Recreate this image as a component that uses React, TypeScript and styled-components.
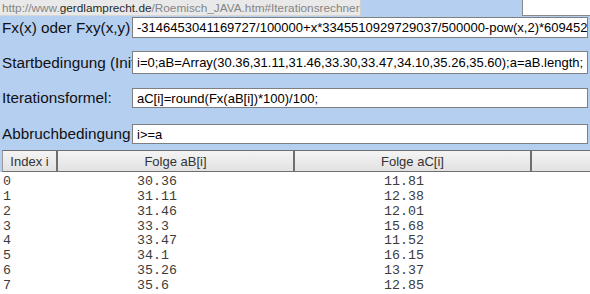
import React from "react";
import styled, { createGlobalStyle } from "styled-components";

const GlobalStyle = createGlobalStyle`
  html, body {
    margin: 0;
    padding: 0;
    background: #b5cff1;
    overflow: hidden;
  }
  body {
    font-family: "Liberation Sans", Arial, sans-serif;
  }
`;

const Page = styled.div`
  position: relative;
  width: 590px;
  height: 294px;
  overflow: hidden;
`;

// status bar link preview, lies over the page
const UrlTip = styled.div`
  position: absolute;
  left: 0;
  top: 0;
  width: 361px;
  height: 16px;
  box-sizing: border-box;
  padding: 0 0 0 2px;
  background: #e9e9e9;
  border-right: 1px solid #cfcfcf;
  border-bottom: 1px solid #d6d6d6;
  font-size: 11.8px;
  line-height: 16px;
  color: #858585;
  white-space: nowrap;
  overflow: hidden;
  z-index: 2;
`;

const Domain = styled.span`
  color: #2a2a2a;
`;

const TopStrip = styled.div`
  display: flex;
  justify-content: flex-end;
  height: 17px;
`;

const TopBox = styled.div`
  width: 67px;
  height: 15px;
  background: #fff;
  border-left: 1px solid #8a8a8a;
  border-bottom: 1px solid #8a8a8a;
`;

const Row = styled.div<{ $h: number; $mt: number }>`
  display: flex;
  align-items: center;
  height: ${(p) => p.$h}px;
  margin-top: ${(p) => p.$mt}px;
`;

const Label = styled.div`
  width: 130px;
  padding-left: 2px;
  flex: none;
  font-size: 15.3px;
  color: #111;
  white-space: nowrap;
  overflow: hidden;
`;

const Field = styled.div`
  flex: 1;
  height: 100%;
  margin-right: 2px;
  box-sizing: border-box;
  background: #fff;
  border: 1px solid #7f7f7f;
  padding: 0 0 0 4px;
  display: flex;
  align-items: center;
  font-size: 13px;
  color: #000;
  white-space: nowrap;
  overflow: hidden;
`;

const Header = styled.div`
  display: grid;
  grid-template-columns: 55px 237px 237px 1fr;
  margin: 6px 0 0 2px;
  height: 22px;
  box-sizing: border-box;
  border-top: 1px solid #6f6f6f;
  border-left: 1px solid #9a9a9a;
  border-bottom: 1px solid #6f6f6f;
  background: linear-gradient(#f4f4f4, #e2e2e2);
`;

const HeadCell = styled.div<{ $last?: boolean }>`
  display: flex;
  align-items: center;
  justify-content: center;
  font-size: 13px;
  color: #333;
  border-right: ${(p) => (p.$last ? "none" : "2px solid #6e6e6e")};
`;

const Body = styled.div`
  background: #fff;
  padding: 3px 0 0 3px;
  height: 130px;
  font-family: "Liberation Mono", "Courier New", monospace;
  font-size: 13.3px;
  line-height: 14.86px;
  color: #3c3c3c;
`;

const DataRow = styled.div`
  display: grid;
  grid-template-columns: 134px 247px 1fr;
  white-space: pre;
`;

const fields = [
  {
    label: "Fx(x) oder Fxy(x,y)",
    value:
      "-3146453041169727/100000+x*3345510929729037/500000-pow(x,2)*6094528",
    h: 21,
    mt: 0,
  },
  {
    label: "Startbedingung (Initialisierung)",
    value:
      "i=0;aB=Array(30.36,31.11,31.46,33.30,33.47,34.10,35.26,35.60);a=aB.length;",
    h: 23,
    mt: 13,
  },
  {
    label: "Iterationsformel:",
    value: "aC[i]=round(Fx(aB[i])*100)/100;",
    h: 20,
    mt: 14,
  },
  { label: "Abbruchbedingung", value: "i>=a", h: 20, mt: 16 },
];

const rows = [
  ["0", "30.36", "11.81"],
  ["1", "31.11", "12.38"],
  ["2", "31.46", "12.01"],
  ["3", "33.3", "15.68"],
  ["4", "33.47", "11.52"],
  ["5", "34.1", "16.15"],
  ["6", "35.26", "13.37"],
  ["7", "35.6", "12.85"],
];

export default function App() {
  return (
    <Page>
      <GlobalStyle />
      <UrlTip>
        http://www.<Domain>gerdlamprecht.de</Domain>/Roemisch_JAVA.htm#Iterationsrechner
      </UrlTip>
      <TopStrip>
        <TopBox />
      </TopStrip>
      {fields.map((f) => (
        <Row key={f.label} $h={f.h} $mt={f.mt}>
          <Label>{f.label}</Label>
          <Field>{f.value}</Field>
        </Row>
      ))}
      <Header>
        <HeadCell>Index i</HeadCell>
        <HeadCell>Folge aB[i]</HeadCell>
        <HeadCell>Folge aC[i]</HeadCell>
        <HeadCell $last />
      </Header>
      <Body>
        {rows.map((r) => (
          <DataRow key={r[0]}>
            <span>{r[0]}</span>
            <span>{r[1]}</span>
            <span>{r[2]}</span>
          </DataRow>
        ))}
      </Body>
    </Page>
  );
}
